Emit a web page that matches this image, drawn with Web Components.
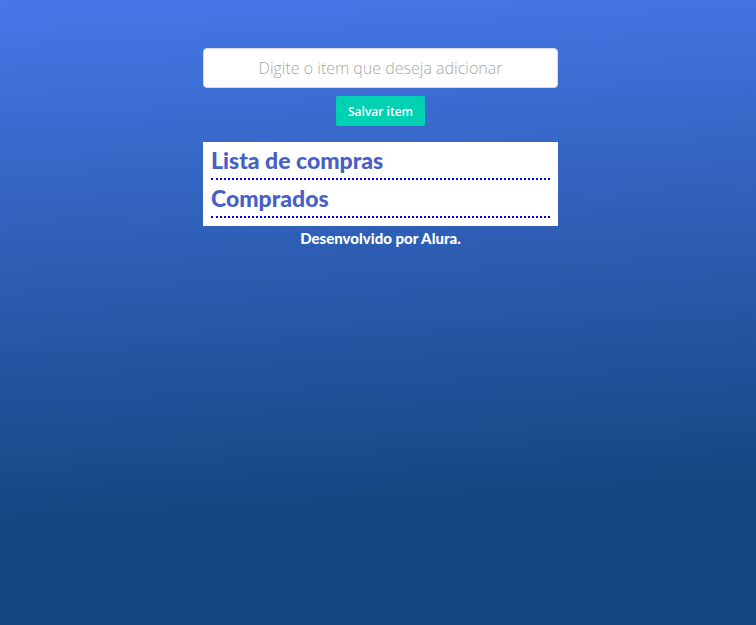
<!DOCTYPE html>
<html lang="pt-BR">
<head>
<meta charset="utf-8">
<title>Lista de compras</title>
<style>
html{min-height:100%;display:flex}
body{margin:0;flex:1;font-family:"Open Sans","Noto Sans",sans-serif;background:linear-gradient(177deg,#4777e8 0%,#14457f 80%)}
</style>
</head>
<body>
<shopping-app></shopping-app>
<script>
customElements.define('item-form', class extends HTMLElement {
  constructor() {
    super();
    this.attachShadow({mode: 'open'}).innerHTML = `
<style>
:host{display:block}
form{display:flex;flex-direction:column;align-items:center;gap:8px;margin:0}
input{box-sizing:border-box;width:100%;height:40px;border:1px solid #dbdbdb;border-radius:4px;padding:2px 12px;font:300 16px "Open Sans",sans-serif;text-align:center;color:#363636;background:#fff;box-shadow:inset 0 1px 2px rgba(10,10,10,.05)}
input::placeholder{color:#a8a8a8;opacity:1}
button{height:30px;padding:0 12px;border:0;border-radius:2px;background:#00d1b2;color:#fff;font:600 12px "Open Sans",sans-serif}
</style>
<form><input type="text" aria-label="Item" placeholder="Digite o item que deseja adicionar"><button type="button">Salvar item</button></form>`;
  }
});
customElements.define('item-list', class extends HTMLElement {
  constructor() {
    super();
    this.attachShadow({mode: 'open'}).innerHTML = `
<style>
:host{display:block}
h2{margin:0;height:36px;border-bottom:2px dotted #0000ff;color:#485fc7;font:900 23px/36px Lato,cursive}
</style>
<h2><slot></slot></h2>`;
  }
});
customElements.define('shopping-app', class extends HTMLElement {
  constructor() {
    super();
    this.attachShadow({mode: 'open'}).innerHTML = `
<style>
:host{display:block;padding:48px 16px 16px 21px}
main{max-width:355px;margin:0 auto}
section{margin-top:16px;padding:0 8px 8px;background:#fff}
footer{color:#fff;text-align:center;font:900 15px/24px Lato,cursive}
</style>
<main><item-form></item-form>
<section><item-list>Lista de compras</item-list><item-list>Comprados</item-list></section>
<footer>Desenvolvido por Alura.</footer></main>`;
  }
});
</script>
</body>
</html>
